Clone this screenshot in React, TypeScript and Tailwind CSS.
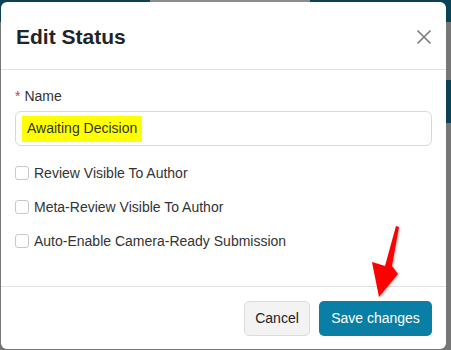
import React from 'react';

const font = { fontFamily: '"Liberation Sans", Arial, sans-serif' };

function Check({ label }: { label: string }) {
  return (
    <label className="flex items-center gap-[5px] h-[14px] text-[14px] text-[#333]">
      <span className="w-[14px] h-[14px] rounded-[3px] border border-[#c8c8c8] bg-white shrink-0" />
      {label}
    </label>
  );
}

export default function App() {
  return (
    <div className="relative w-[451px] h-[350px] bg-[#767676] overflow-hidden" style={font}>
      {/* page behind the overlay */}
      <div className="absolute top-0 left-0 w-full h-[22px] bg-[#0c4255]" />
      <div className="absolute top-0 left-[150px] w-[160px] h-[8px] bg-[#8c8c8c]" />
      <div className="absolute top-[80px] right-0 w-[5px] h-[43px] bg-[#0c4255]" />

      <div className="relative ml-[1px] mt-[2px] w-[445px] h-[347px] bg-white rounded-[6px] flex flex-col">
        <div className="flex items-center justify-between h-[68px] pl-[15px] pr-[14px] pt-[2px] border-b border-[#dee2e6]">
          <h1 className="text-[21px] font-bold text-[#212529]">Edit Status</h1>
          <svg width="16" height="16" viewBox="0 0 16 16">
            <path d="M1.5 1.5 L14.5 14.5 M14.5 1.5 L1.5 14.5" stroke="#7a7a7a" strokeWidth="1.6" />
          </svg>
        </div>

        <div className="flex-1 px-[14px] pt-[18px]">
          <div className="text-[14px] text-[#333] leading-[16px]">
            <span className="text-[#dc3545] mr-[4px]">*</span>Name
          </div>
          <div className="mt-[7px] h-[35px] w-[417px] rounded-[6px] border border-[#d9d9d9] flex items-center pl-[6px]">
            <span className="bg-[#ffff00] text-[14px] text-[#333] px-[5px] h-[26px] flex items-center whitespace-nowrap shrink-0">
              Awaiting Decision
            </span>
          </div>
          <div className="mt-[20px] flex flex-col gap-[20px]">
            <Check label="Review Visible To Author" />
            <Check label="Meta-Review Visible To Author" />
            <Check label="Auto-Enable Camera-Ready Submission" />
          </div>
        </div>

        <div className="h-[63px] border-t border-[#dee2e6] flex items-start justify-end gap-[9px] pt-[14px] pr-[14px]">
          <button className="h-[35px] w-[66px] rounded-[5px] bg-[#f3f3f3] border border-[#dcdcdc] text-[14px] text-[#222]">
            Cancel
          </button>
          <button className="h-[35px] w-[113px] rounded-[5px] bg-[#0a7fa6] text-[14px] text-white">
            Save changes
          </button>
        </div>
      </div>

      <svg className="absolute left-0 top-0" width="451" height="350" style={{ filter: 'drop-shadow(1px 1px 1px rgba(0,0,0,0.25))' }}>
        <polygon points="396,226 399,227 392,266 398,274 379,297 372,262 385,266" fill="#ff0000" />
      </svg>
    </div>
  );
}
